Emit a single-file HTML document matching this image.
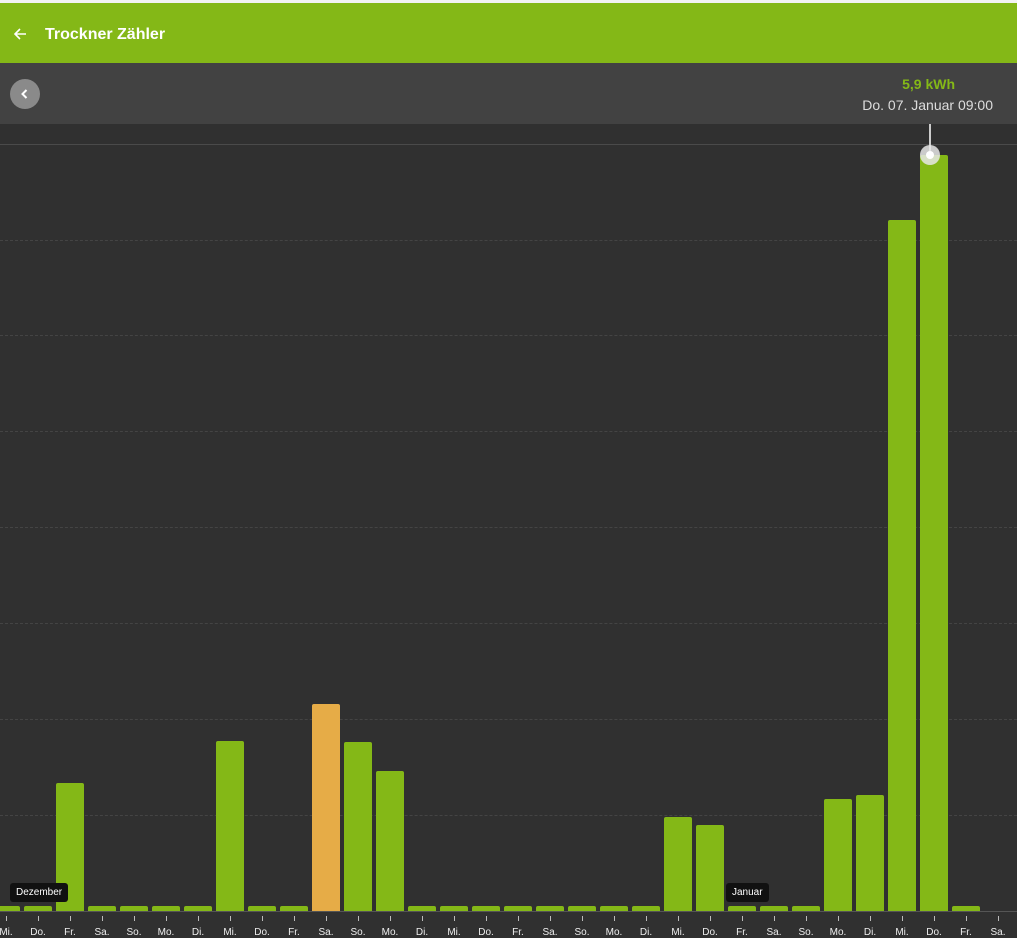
<!DOCTYPE html><html><head><style>
body{margin:0;width:1017px;height:937px;overflow:hidden;background:#303030;font-family:"Liberation Sans",sans-serif;position:relative}
.top{position:absolute;left:0;top:0;width:1017px;height:3px;background:#f2f2f2}
.hdr{position:absolute;left:0;top:3px;width:1017px;height:60px;background:#84b817;color:#fff}
.sub{position:absolute;left:0;top:63px;width:1017px;height:61px;background:#424242}
.g{position:absolute;left:0;width:1017px;height:0;border-top:1px dashed #444}
.b{position:absolute;width:28px;background:#84b817;border-radius:2px 2px 0 0;bottom:26px}
.l{position:absolute;top:927px;width:30px;text-align:center;font-size:10px;color:#eee}
.t{position:absolute;top:916px;width:1px;height:5px;background:#bbb}
.tag{position:absolute;top:883px;height:19px;line-height:19px;background:#111;color:#fff;font-size:10px;padding:0 6px;border-radius:3px}
</style></head><body>
<div class="top"></div>
<div class="hdr"><svg style="position:absolute;left:12px;top:23px" width="16" height="16" viewBox="0 0 16 16"><path d="M14 8H3M8 3L3 8l5 5" stroke="#fff" stroke-width="1.6" fill="none"/></svg><div style="position:absolute;left:45px;top:23px;font-size:16px;font-weight:bold">Trockner Zähler</div></div>
<div class="sub"><div style="position:absolute;left:10px;top:16px;width:30px;height:30px;border-radius:50%;background:#8a8a8a"></div><svg style="position:absolute;left:19px;top:25px" width="12" height="12" viewBox="0 0 12 12"><path d="M7.5 2L3.5 6l4 4" stroke="#fff" stroke-width="2" fill="none"/></svg>
<div style="position:absolute;right:62px;top:13px;color:#84b817;font-weight:bold;font-size:14px">5,9 kWh</div>
<div style="position:absolute;right:24px;top:34px;color:#ddd;font-size:14px">Do. 07. Januar 09:00</div></div>
<div class="g" style="top:144px;border-top:1px solid #4a4a4a"></div>
<div class="g" style="top:240px"></div><div class="g" style="top:335px"></div><div class="g" style="top:431px"></div><div class="g" style="top:527px"></div><div class="g" style="top:623px"></div><div class="g" style="top:719px"></div><div class="g" style="top:815px"></div>
<div style="position:absolute;left:0;top:911px;width:1017px;height:1px;background:#555"></div>
<div id="c"></div>
<div style="position:absolute;left:929px;top:124px;width:2px;height:27px;background:#ccc"></div>
<div style="position:absolute;left:920px;top:145px;width:20px;height:20px;border-radius:50%;background:rgba(230,230,230,.85)"></div>
<div style="position:absolute;left:926px;top:151px;width:8px;height:8px;border-radius:50%;background:#fff"></div>
<div class="tag" style="left:10px">Dezember</div><div class="tag" style="left:726px">Januar</div>
<script>
var tops=[906,906,783,906,906,906,906,741,906,906,704,742,771,906,906,906,906,906,906,906,906,817,825,906,906,906,799,795,220,155,906,null];
var lab="Mi. Do. Fr. Sa. So. Mo. Di. Mi. Do. Fr. Sa. So. Mo. Di. Mi. Do. Fr. Sa. So. Mo. Di. Mi. Do. Fr. Sa. So. Mo. Di. Mi. Do. Fr. Sa.".split(" ");
var h="";for(var i=0;i<32;i++){var cx=6+32*i;if(tops[i]!==null)h+='<div class="b" style="left:'+(cx-14)+'px;top:'+tops[i]+'px;'+(i==10?'background:#e6ac47':'')+'"></div>';h+='<div class="t" style="left:'+cx+'px"></div><div class="l" style="left:'+(cx-15)+'px">'+lab[i]+'</div>';}
document.getElementById("c").innerHTML=h;
</script>
</body></html>
